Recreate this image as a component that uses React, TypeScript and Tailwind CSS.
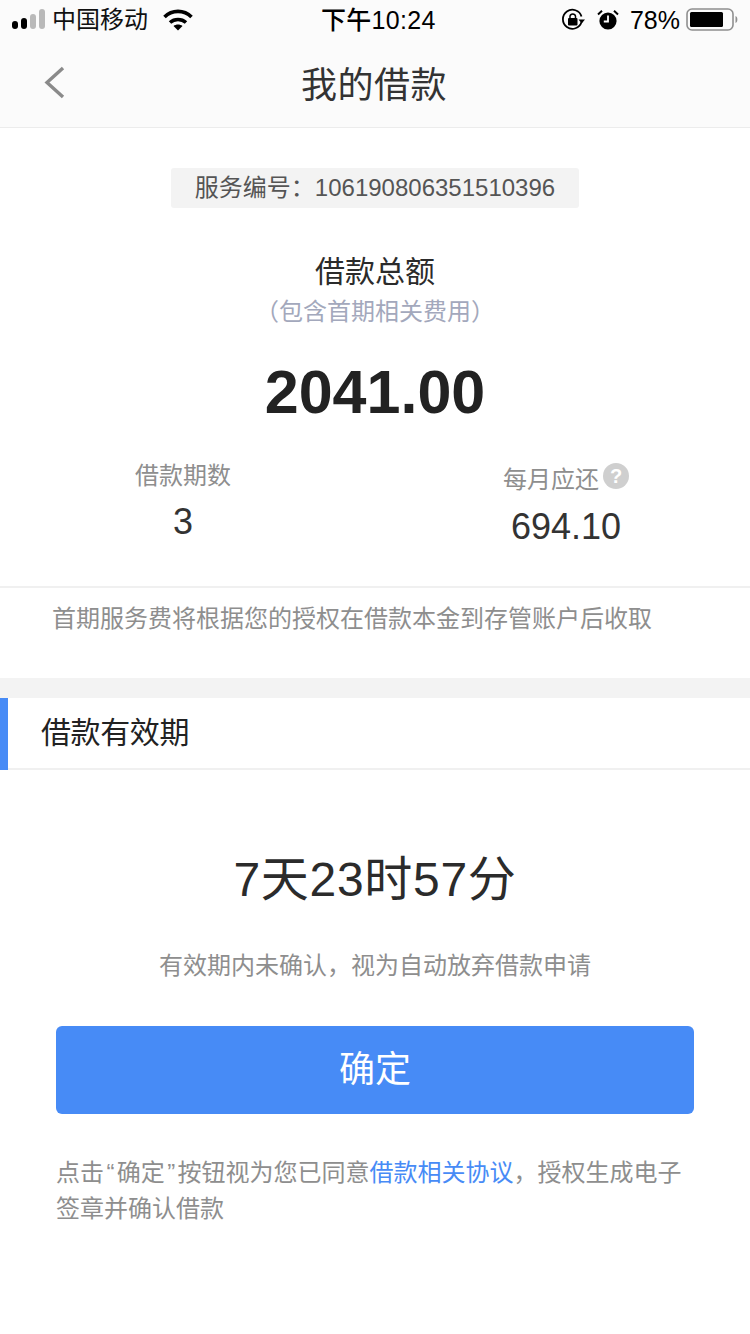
function Signal() {
  return (
    <svg width="35" height="22" viewBox="0 0 35 22" className="block">
      <rect x="0" y="12" width="6" height="8" rx="3" fill="#000" />
      <rect x="9" y="9" width="6" height="11" rx="3" fill="#000" />
      <rect x="18" y="5" width="6" height="15" rx="3" fill="#b9b9b9" />
      <rect x="27" y="0" width="6" height="20" rx="3" fill="#b9b9b9" />
    </svg>
  );
}

function Wifi() {
  return (
    <svg width="30" height="22" viewBox="0 0 30 22" className="block">
      <path d="M1.5 8 C9 0.5 21 0.5 28.5 8" fill="none" stroke="#000" strokeWidth="3.6" />
      <path d="M7 13.5 C11.5 9.5 18.5 9.5 23 13.5" fill="none" stroke="#000" strokeWidth="3.6" />
      <path d="M10.5 17 C13 15 17 15 19.5 17 L15 21.5 Z" fill="#000" />
    </svg>
  );
}

function LockRotate() {
  return (
    <svg width="24" height="24" viewBox="0 0 24 24" className="block">
      <path d="M20.5 14 A9.5 9.5 0 1 1 20.5 8.5" fill="none" stroke="#000" strokeWidth="1.8" />
      <path d="M17.5 11.5 L24 11.5 L20.7 15.5 Z" fill="#000" />
      <rect x="7" y="10" width="9.5" height="7.5" rx="1" fill="#000" />
      <path d="M9 10 V8.2 A2.8 2.8 0 0 1 14.5 8.2 V10" fill="none" stroke="#000" strokeWidth="1.5" />
    </svg>
  );
}

function Alarm() {
  return (
    <svg width="22" height="22" viewBox="0 0 22 22" className="block">
      <circle cx="11" cy="12" r="8.6" fill="#000" />
      <path d="M11 6.5 V12.5 H6.8" fill="none" stroke="#fff" strokeWidth="1.8" />
      <path d="M1 5.5 L5 1.8 M21 5.5 L17 1.8" stroke="#000" strokeWidth="2" />
    </svg>
  );
}

function Battery() {
  return (
    <svg width="54" height="24" viewBox="0 0 54 24" className="block">
      <rect x="1" y="1" width="46" height="21" rx="5" fill="none" stroke="#8f8f8f" strokeWidth="1.6" />
      <rect x="4" y="4" width="33" height="15" rx="1.5" fill="#000" />
      <path d="M49.5 8 C52 8.5 52 14.5 49.5 15 Z" fill="#8f8f8f" />
    </svg>
  );
}

export default function App() {
  return (
    <div
      className="w-[750px] h-[1334px] bg-white overflow-hidden flex flex-col text-[#222222]"
      style={{ fontFamily: '"Liberation Sans", "Noto Sans CJK SC", sans-serif' }}
    >
      <header className="h-[128px] bg-[#fbfbfb] border-b border-[#ececec] flex flex-col">
        <div className="h-[40px] flex items-center pl-[12px] pr-[10px] text-black">
          <div className="flex items-center w-[309px]">
            <Signal />
            <span className="text-[24px] leading-[40px] ml-[5px] text-[#111]">中国移动</span>
            <span className="ml-[15px]"><Wifi /></span>
          </div>
          <span className="text-[25px] leading-[40px] font-medium tracking-[0.3px]">下午10:24</span>
          <div className="flex items-center justify-end ml-auto">
            <LockRotate />
            <span className="ml-[12px]"><Alarm /></span>
            <span className="text-[25px] leading-[40px] ml-[11px]">78%</span>
            <span className="ml-[6px]"><Battery /></span>
          </div>
        </div>
        <div className="flex-1 relative flex items-center justify-center">
          <svg width="24" height="36" viewBox="0 0 24 36" className="absolute left-[43px] top-[25px]">
            <path d="M20 3 L4 17.5 L20 32" fill="none" stroke="#8a8a8a" strokeWidth="3.4" />
          </svg>
          <span className="text-[36px] leading-[50px] text-[#333] mt-[4px] mr-[2px] tracking-[0.5px]">我的借款</span>
        </div>
      </header>

      <section className="h-[458px] flex flex-col items-center">
        <div className="mt-[40px] h-[40px] w-[408px] bg-[#f3f3f3] rounded-[3px] flex items-center justify-center text-[24px] text-[#555]">
          服务编号：106190806351510396
        </div>
        <div className="mt-[44px] text-[30px] leading-[40px] text-[#2b2b2b]">借款总额</div>
        <div className="mt-[2px] text-[24px] leading-[36px] text-[#a3a8bc]">（包含首期相关费用）</div>
        <div className="mt-[26px] text-[61px] leading-[72px] font-bold text-[#222]">2041.00</div>
        <div className="w-full flex mt-[30px]">
          <div className="w-[366px] flex flex-col items-center">
            <div className="text-[24px] leading-[36px] text-[#8e8e8e]">借款期数</div>
            <div className="text-[36px] leading-[50px] text-[#333] mt-[3px]">3</div>
          </div>
          <div className="w-[384px] pl-[16px] flex flex-col items-center pt-[4px]">
            <div className="flex items-center text-[24px] leading-[36px] text-[#8e8e8e]">
              每月应还
              <span className="ml-[4px] w-[26px] h-[26px] rounded-full bg-[#cfcfcf] text-white text-[20px] font-bold flex items-center justify-center -mt-[8px]">?</span>
            </div>
            <div className="text-[36px] leading-[50px] text-[#333] mt-[4px]">694.10</div>
          </div>
        </div>
      </section>

      <div className="border-t-2 border-[#f0f0f0] h-[92px] pl-[52px] pt-[13px] text-[24px] leading-[36px] text-[#8e8e8e]">
        首期服务费将根据您的授权在借款本金到存管账户后收取
      </div>

      <div className="h-[20px] bg-[#f3f3f3]" />

      <div className="h-[72px] flex items-center border-b-2 border-[#f0f0f0] relative">
        <div className="absolute left-0 top-0 w-[8px] h-[72px] bg-[#478bf6]" />
        <span className="ml-[41px] text-[30px] leading-[40px] text-[#222] tracking-[-0.4px]">借款有效期</span>
      </div>

      <section className="flex flex-col items-center">
        <div className="mt-[77px] text-[48px] leading-[66px] text-[#2b2b2b] tracking-[0.7px]">7天23时57分</div>
        <div className="mt-[35px] text-[24px] leading-[36px] text-[#8e8e8e]">有效期内未确认，视为自动放弃借款申请</div>
        <button className="mt-[42px] w-[638px] h-[88px] rounded-[6px] bg-[#478bf6] text-white text-[36px]">确定</button>
        <p className="mt-[41px] w-[638px] text-[24px] leading-[36px] text-[#8e8e8e]">
          点击<span className="mx-[2.4px]">“</span>确定<span className="mx-[2.4px]">”</span>按钮视为您已同意<span className="text-[#478bf6]">借款相关协议</span>，授权生成电子签章并确认借款
        </p>
      </section>
    </div>
  );
}
